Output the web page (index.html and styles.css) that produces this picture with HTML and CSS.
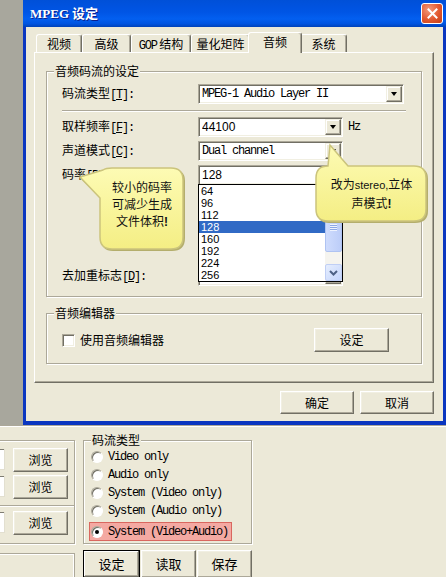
FILE: index.html
```html
<!DOCTYPE html>
<html lang="zh-CN">
<head>
<meta charset="UTF-8">
<title>MPEG 设定</title>
<link rel="stylesheet" href="styles.css">
</head>
<body>
<div class="desk">
  <div class="backdrop"></div>

  <div class="window">
    <div class="titlebar">
      <span class="title"><span class="title-latin">MPEG</span> 设定</span>
      <span class="close-btn">
        <svg width="11" height="11" viewBox="0 0 11 11"><path d="M1.5 1.5 L9.5 9.5 M9.5 1.5 L1.5 9.5" stroke="#fff" stroke-width="2" stroke-linecap="square"/></svg>
      </span>
    </div>

    <div class="client">
      <div class="tabs">
        <span class="tab tab-video">视频</span>
        <span class="tab tab-adv">高级</span>
        <span class="tab tab-gop"><span class="mono">GOP</span> 结构</span>
        <span class="tab tab-quant">量化矩阵</span>
        <span class="tab tab-audio is-active">音频</span>
        <span class="tab tab-sys">系统</span>
      </div>

      <div class="panel">
        <div class="group group-stream">
          <span class="group-title">音频码流的设定</span>

          <div class="field">
            <span class="field-label">码流类型<span class="mono">[<u>T</u>]:</span></span>
            <div class="combo combo-wide">
              <span class="combo-text mono">MPEG-1 Audio Layer II</span>
              <span class="drop-btn"></span>
            </div>
          </div>

          <div class="sep"></div>

          <div class="field">
            <span class="field-label">取样频率<span class="mono">[<u>F</u>]:</span></span>
            <div class="combo">
              <span class="combo-text num">44100</span>
              <span class="drop-btn"></span>
            </div>
            <span class="unit mono">Hz</span>
          </div>

          <div class="field">
            <span class="field-label">声道模式<span class="mono">[<u>C</u>]:</span></span>
            <div class="combo">
              <span class="combo-text mono">Dual channel</span>
              <span class="drop-btn"></span>
            </div>
          </div>

          <div class="field">
            <span class="field-label">码率<span class="mono">[<u>B</u>]:</span></span>
            <div class="combo combo-open">
              <span class="combo-text num">128</span>
              <span class="drop-btn"></span>

              <div class="droplist">
                <div class="droplist-items">
                  <div class="droplist-item">64</div>
                  <div class="droplist-item">96</div>
                  <div class="droplist-item">112</div>
                  <div class="droplist-item is-selected">128</div>
                  <div class="droplist-item">160</div>
                  <div class="droplist-item">192</div>
                  <div class="droplist-item">224</div>
                  <div class="droplist-item">256</div>
                </div>
                <div class="scrollbar">
                  <span class="sb-btn sb-up">
                    <svg width="9" height="6" viewBox="0 0 9 6"><path d="M1 5 L4.5 1.5 L8 5" fill="none" stroke="#4d6185" stroke-width="2"/></svg>
                  </span>
                  <span class="sb-thumb"></span>
                  <span class="sb-track"></span>
                  <span class="sb-btn sb-down">
                    <svg width="9" height="6" viewBox="0 0 9 6"><path d="M1 1 L4.5 4.5 L8 1" fill="none" stroke="#4d6185" stroke-width="2"/></svg>
                  </span>
                </div>
              </div>
            </div>
          </div>

          <div class="field field-deemph">
            <span class="field-label">去加重标志<span class="mono">[<u>D</u>]:</span></span>
            <div class="combo">
              <span class="combo-text"></span>
              <span class="drop-btn"></span>
            </div>
          </div>
        </div>

        <div class="group group-editor">
          <span class="group-title">音频编辑器</span>
          <div class="editor-row">
            <span class="checkbox"></span>
            <span class="check-label">使用音频编辑器</span>
            <span class="btn btn-setup">设定</span>
          </div>
        </div>
      </div>

      <div class="actions">
        <span class="btn btn-dialog">确定</span>
        <span class="btn btn-dialog">取消</span>
      </div>
    </div>
  </div>

  <!-- callouts drawn over the dialog -->
  <svg class="callout-shape callout-left-shape" width="112" height="92" viewBox="78 164 112 92">
    <defs>
      <linearGradient id="tipFill" x1="0" y1="0" x2="0" y2="1">
        <stop offset="0" stop-color="#fdfbb4"/>
        <stop offset="1" stop-color="#f4ee84"/>
      </linearGradient>
    </defs>
    <path d="M113 169 H172 Q185 169 185 181 V238 Q185 251 172 251 H113 Q101 251 101 238 V199 L81 179 L104 171 Q107 169 113 169 Z" fill="#b4ae6c"/>
    <path d="M112 168 H171 Q183 168 183 180 V237 Q183 249 171 249 H112 Q100 249 100 237 V198 L80 177 L103 170 Q106 168 112 168 Z" fill="url(#tipFill)" stroke="#cbc47c" stroke-width="1.5"/>
  </svg>
  <div class="callout-text callout-left">较小的码率<br>可减少生成<br>文件体积<b>!</b></div>

  <svg class="callout-shape callout-right-shape" width="118" height="84" viewBox="312 142 118 84">
    <path d="M329 167 L331 146 L349 167 H415 Q428 167 428 179 V211 Q428 223 415 223 H329 Q317 223 317 211 V179 Q317 167 329 167 Z" fill="#b4ae6c"/>
    <path d="M328 166 L330 145 L348 166 H414 Q426 166 426 178 V209 Q426 221 414 221 H328 Q316 221 316 209 V178 Q316 166 328 166 Z" fill="url(#tipFill)" stroke="#cbc47c" stroke-width="1.5"/>
  </svg>
  <div class="callout-text callout-right">改为<span class="latin">stereo,</span>立体<br>声模式<b>!</b></div>
</div>

<div class="app">
  <div class="app-left">
    <div class="group group-files">
      <div class="file-row">
        <span class="file-edit"></span>
        <span class="btn btn-browse">浏览</span>
      </div>
      <div class="file-row">
        <span class="file-edit"></span>
        <span class="btn btn-browse">浏览</span>
      </div>
      <div class="sep sep-files"></div>
      <div class="file-row">
        <span class="file-edit"></span>
        <span class="btn btn-browse">浏览</span>
      </div>
    </div>
    <div class="status-box"></div>
  </div>

  <div class="app-right">
    <div class="group group-type">
      <span class="group-title">码流类型</span>
      <div class="radio-row"><span class="radio"></span><span class="mono">Video only</span></div>
      <div class="radio-row"><span class="radio"></span><span class="mono">Audio only</span></div>
      <div class="radio-row"><span class="radio"></span><span class="mono">System (Video only)</span></div>
      <div class="radio-row"><span class="radio"></span><span class="mono">System (Audio only)</span></div>
      <div class="radio-row is-marked"><span class="radio is-checked"></span><span class="mono">System (Video+Audio)</span></div>
    </div>
    <div class="app-buttons">
      <span class="btn btn-app btn-default">设定</span>
      <span class="btn btn-app">读取</span>
      <span class="btn btn-app">保存</span>
    </div>
  </div>
</div>
</body>
</html>
```

FILE: styles.css
```css
* { box-sizing: border-box; }

html, body { margin: 0; padding: 0; }

body {
   width: 446px;
   height: 577px;
   overflow: hidden;
   background: #ece9d8;
   color: #000;
   font: 12px/14px "Noto Sans CJK SC", "Liberation Sans", sans-serif;
}

u {
   text-decoration: underline;
   text-underline-offset: 1px;
}

.mono {
   font-family: "Liberation Mono", "Noto Sans CJK SC", monospace;
   font-size: 12px;
   letter-spacing: -1.2px;
}

.num {
   font-family: "Liberation Sans", sans-serif;
   font-size: 12px;
}

/* ---- dialog window ---- */

.desk {
   position: relative;
   display: flex;
   height: 425px;
}

.backdrop {
   width: 23px;
   background: #a8a79d;
}

.window {
   width: 423px;
   display: flex;
   flex-direction: column;
}

.titlebar {
   height: 27px;
   display: flex;
   align-items: center;
   padding: 0 3px 0 7px;
   background: linear-gradient(#0050d8 0, #0055e5 45%, #035ff0 70%, #0054e0 88%, #0042b8 100%);
}

.title {
   flex: 1;
   color: #fff;
   font-weight: bold;
   font-size: 13px;
   text-shadow: 1px 1px #0a1f8f;
}

.title-latin {
   font-family: "Liberation Serif", serif;
}

.close-btn {
   width: 22px;
   height: 21px;
   display: flex;
   align-items: center;
   justify-content: center;
   border: 1px solid #fff;
   border-radius: 3px;
   background: radial-gradient(circle at 35% 30%, #f39a7c 0, #e2582f 55%, #c23f19 100%);
}

.client {
   flex: 1;
   display: flex;
   flex-direction: column;
   background: #ece9d8;
   border: solid #0a36c0;
   border-width: 0 3px 4px;
   padding: 4px 9px 7px 8px;
}

/* ---- tabs ---- */

.tabs {
   position: relative;
   z-index: 1;
   display: flex;
   height: 21px;
   padding-left: 2px;
}

.tab {
   height: 18px;
   margin-top: 3px;
   border: 1px solid;
   border-bottom: 0;
   border-color: #fff #716f64 #fff #fff;
   border-radius: 3px 3px 0 0;
   box-shadow: inset -1px 0 #aca899;
   background: #ece9d8;
   text-align: center;
   line-height: 18px;
   white-space: nowrap;
}

.tab-video { width: 46px; }
.tab-adv { width: 49px; }
.tab-gop { width: 60px; }
.tab-quant { width: 59px; }
.tab-audio { width: 54px; }
.tab-sys { width: 47px; }

.tab.is-active {
   position: relative;
   z-index: 2;
   height: 21px;
   margin: 1px -2px 0;
}

.panel {
   height: 331px;
   border: 1px solid;
   border-color: #fff #716f64 #716f64 #fff;
   box-shadow: inset -1px -1px #aca899;
   padding: 18px 11px 0;
}

/* ---- group boxes ---- */

.group {
   position: relative;
   border: 1px solid #aca899;
   box-shadow: inset 1px 1px #fff, 1px 1px #fff;
}

.group-title {
   position: absolute;
   top: -8px;
   left: 7px;
   padding: 0 1px;
   background: #ece9d8;
   line-height: 14px;
   white-space: nowrap;
}

.group-stream {
   height: 226px;
   padding: 12px 15px 0;
}

.field {
   display: flex;
   align-items: center;
   height: 20px;
}

.field + .field { margin-top: 4px; }

.field-label {
   width: 136px;
   white-space: nowrap;
}

.field-deemph { margin-top: 81px !important; }

.sep {
   height: 2px;
   margin: 6px 0 5px;
   border-top: 1px solid #aca899;
   border-bottom: 1px solid #fff;
}

.combo {
   position: relative;
   width: 145px;
   height: 20px;
   display: flex;
   align-items: center;
   padding: 1px 1px 1px 3px;
   background: #fff;
   border: 1px solid;
   border-color: #aca899 #fff #fff #aca899;
   box-shadow: inset 1px 1px #716f64, inset -1px -1px #f1efe2;
}

.combo-wide { width: 206px; }

.combo-text {
   flex: 1;
   white-space: nowrap;
   overflow: hidden;
   line-height: 16px;
}

.drop-btn {
   width: 16px;
   height: 16px;
   display: flex;
   align-items: center;
   justify-content: center;
   background: #ece9d8;
   border: 1px solid;
   border-color: #f1efe2 #716f64 #716f64 #f1efe2;
   box-shadow: inset -1px -1px #aca899, inset 1px 1px #fff;
}

.drop-btn::after {
   content: "";
   width: 0;
   height: 0;
   border-left: 3.5px solid transparent;
   border-right: 3.5px solid transparent;
   border-top: 4px solid #000;
}

.unit { margin-left: 5px; }

/* ---- open list ---- */

.droplist {
   position: absolute;
   z-index: 3;
   top: 18px;
   left: -1px;
   width: 145px;
   height: 98px;
   display: flex;
   background: #fff;
   border: 1px solid #000;
}

.droplist-items { width: 126px; }

.droplist-item {
   height: 12px;
   padding-left: 2px;
   font-family: "Liberation Sans", sans-serif;
   font-size: 11px;
   line-height: 12px;
}

.droplist-item.is-selected {
   background: #316ac5;
   color: #fff;
}

.scrollbar {
   width: 17px;
   display: flex;
   flex-direction: column;
   background: #f5f4ef;
}

.sb-btn {
   height: 17px;
   display: flex;
   align-items: center;
   justify-content: center;
   border: 1px solid #c0cff5;
   border-radius: 2px;
   background: linear-gradient(135deg, #e6eefe, #c4d5fc);
}

.sb-thumb {
   position: relative;
   height: 50px;
   border: 1px solid #afc3f2;
   border-radius: 2px;
   background: linear-gradient(90deg, #cfdcfd, #bccdf8);
}

.sb-thumb::after {
   content: "";
   position: absolute;
   left: 4px;
   top: 21px;
   width: 7px;
   height: 7px;
   background: repeating-linear-gradient(#eef3fe 0 1px, #8ca7e6 1px 2px);
}

.sb-track { flex: 1; }

/* ---- editor group ---- */

.group-editor {
   margin-top: 16px;
   height: 51px;
   padding: 14px 32px 0 15px;
}

.editor-row {
   display: flex;
   align-items: center;
   height: 24px;
}

.checkbox {
   width: 13px;
   height: 13px;
   background: #fff;
   border: 1px solid;
   border-color: #aca899 #fff #fff #aca899;
   box-shadow: inset 1px 1px #716f64, inset -1px -1px #f1efe2;
}

.check-label { margin-left: 5px; }

.btn {
   display: flex;
   align-items: center;
   justify-content: center;
   background: #ece9d8;
   border: 1px solid;
   border-color: #fff #716f64 #716f64 #fff;
   box-shadow: inset -1px -1px #aca899, inset 1px 1px #f1efe2;
   white-space: nowrap;
}

.btn-setup {
   margin-left: auto;
   width: 75px;
   height: 24px;
}

.actions {
   display: flex;
   justify-content: flex-end;
   gap: 6px;
   margin-top: 8px;
}

.btn-dialog {
   width: 74px;
   height: 23px;
}

/* ---- callouts ---- */

.callout-shape {
   position: absolute;
   z-index: 5;
}

.callout-left-shape { left: 78px; top: 164px; }
.callout-right-shape { left: 312px; top: 142px; }

.callout-text {
   position: absolute;
   z-index: 6;
   text-align: center;
   line-height: 17px;
   color: #111;
}

.callout-text b {
   font-family: "Liberation Sans", sans-serif;
   font-weight: bold;
}

.callout-left {
   left: 100px;
   top: 178px;
   width: 84px;
}

.callout-right {
   left: 316px;
   top: 175px;
   width: 111px;
}

.latin {
   font-family: "Liberation Sans", sans-serif;
   font-size: 11px;
}

/* ---- application behind the dialog ---- */

.app {
   display: flex;
   height: 152px;
   border-top: 1px solid #aca899;
   box-shadow: inset 0 1px #fff;
   padding-top: 14px;
}

.app-left {
   width: 77px;
   margin-left: -2px;
   display: flex;
   flex-direction: column;
}

.group-files {
   height: 104px;
   padding: 7px 6px 0 0;
}

.file-row {
   display: flex;
   justify-content: space-between;
   height: 24px;
}

.file-row + .file-row { margin-top: 3px; }

.file-edit {
   width: 6px;
   height: 21px;
   margin-top: 1px;
   background: #fff;
   border-right: 1px solid #e2dfd0;
   border-bottom: 1px solid #e2dfd0;
   box-shadow: inset 0 1px #7f7d72;
}

.btn-browse {
   width: 55px;
   height: 24px;
}

.sep-files { margin: 6px -6px 4px 0; }

.status-box {
   flex: 1;
   margin-top: 9px;
   border-top: 1px solid #aca899;
   border-right: 1px solid #aca899;
   box-shadow: inset 0 1px #fff, inset -1px 0 #fff;
}

.app-right {
   width: 169px;
   margin-left: 8px;
}

.group-type {
   height: 104px;
   padding: 7px 0 0 7px;
}

.radio-row {
   display: flex;
   align-items: center;
   gap: 5px;
   height: 18px;
   white-space: nowrap;
}

.radio-row.is-marked {
   width: 143px;
   height: 19px;
   margin: 2px 0 0 -2px;
   padding-left: 1px;
   background: #f4a9a2;
   border: 1px solid #d9675f;
}

.radio {
   position: relative;
   width: 12px;
   height: 12px;
   border-radius: 50%;
   background: #fff;
   border: 1px solid;
   border-color: #aca899 #fff #fff #aca899;
   box-shadow: inset 1px 1px #716f64;
}

.radio.is-checked::after {
   content: "";
   position: absolute;
   left: 3px;
   top: 3px;
   width: 4px;
   height: 4px;
   border-radius: 50%;
   background: #000;
}

.app-buttons {
   display: flex;
   gap: 1px;
   margin-top: 6px;
}

.btn-app {
   width: 55px;
   height: 28px;
   font-size: 13px;
}

.btn-default {
   width: 57px;
   border-color: #000;
   box-shadow: inset -1px -1px #716f64, inset 1px 1px #fff, inset -2px -2px #aca899;
}
```
